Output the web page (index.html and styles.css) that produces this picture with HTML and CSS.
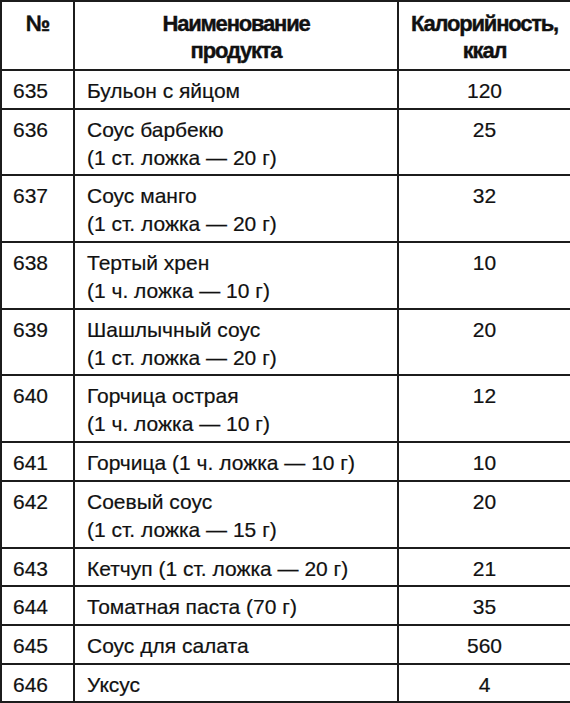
FILE: index.html
```html
<!DOCTYPE html>
<html lang="ru">
<head>
<meta charset="utf-8">
<title>Калорийность продуктов</title>
<link rel="stylesheet" href="styles.css">
</head>
<body>
<table class="cal">
  <colgroup>
    <col class="c-num">
    <col class="c-name">
    <col class="c-kcal">
  </colgroup>
  <thead>
    <tr>
      <th>№</th>
      <th>Наименование<br>продукта</th>
      <th>Калорийность,<br>ккал</th>
    </tr>
  </thead>
  <tbody>
    <tr><td class="num">635</td><td class="name">Бульон с яйцом</td><td class="kcal">120</td></tr>
    <tr><td class="num">636</td><td class="name">Соус барбекю<br>(1 ст. ложка — 20 г)</td><td class="kcal">25</td></tr>
    <tr><td class="num">637</td><td class="name">Соус манго<br>(1 ст. ложка — 20 г)</td><td class="kcal">32</td></tr>
    <tr><td class="num">638</td><td class="name">Тертый хрен<br>(1 ч. ложка — 10 г)</td><td class="kcal">10</td></tr>
    <tr><td class="num">639</td><td class="name">Шашлычный соус<br>(1 ст. ложка — 20 г)</td><td class="kcal">20</td></tr>
    <tr><td class="num">640</td><td class="name">Горчица острая<br>(1 ч. ложка — 10 г)</td><td class="kcal">12</td></tr>
    <tr><td class="num">641</td><td class="name">Горчица (1 ч. ложка — 10 г)</td><td class="kcal">10</td></tr>
    <tr><td class="num">642</td><td class="name">Соевый соус<br>(1 ст. ложка — 15 г)</td><td class="kcal">20</td></tr>
    <tr><td class="num">643</td><td class="name">Кетчуп (1 ст. ложка — 20 г)</td><td class="kcal">21</td></tr>
    <tr><td class="num">644</td><td class="name">Томатная паста (70 г)</td><td class="kcal">35</td></tr>
    <tr><td class="num">645</td><td class="name">Соус для салата</td><td class="kcal">560</td></tr>
    <tr><td class="num">646</td><td class="name">Уксус</td><td class="kcal">4</td></tr>
  </tbody>
</table>
</body>
</html>
```

FILE: styles.css
```css
html, body {
  margin: 0;
  padding: 0;
  background: #ffffff;
}

.cal {
  border-collapse: collapse;
  table-layout: fixed;
  width: 570px;
  font-family: "Liberation Sans", Arial, sans-serif;
  color: #111111;
}

.c-num { width: 73px; }
.c-name { width: 324px; }
.c-kcal { width: 173px; }

.cal th,
.cal td {
  border: 2px solid #1c1c1c;
  vertical-align: top;
}

.cal th {
  font-size: 22px;
  font-weight: bold;
  line-height: 27px;
  letter-spacing: -1.2px;
  text-align: center;
  padding: 8px 2px 5px;
  -webkit-text-stroke: 0.4px #111111;
}

.cal td {
  font-size: 21px;
  line-height: 28px;
  padding: 6px 12px 2.7px;
  -webkit-text-stroke: 0.2px #111111;
}

.cal td.num {
  padding-left: 11px;
  padding-right: 4px;
}

.cal td.kcal {
  text-align: center;
}
```
